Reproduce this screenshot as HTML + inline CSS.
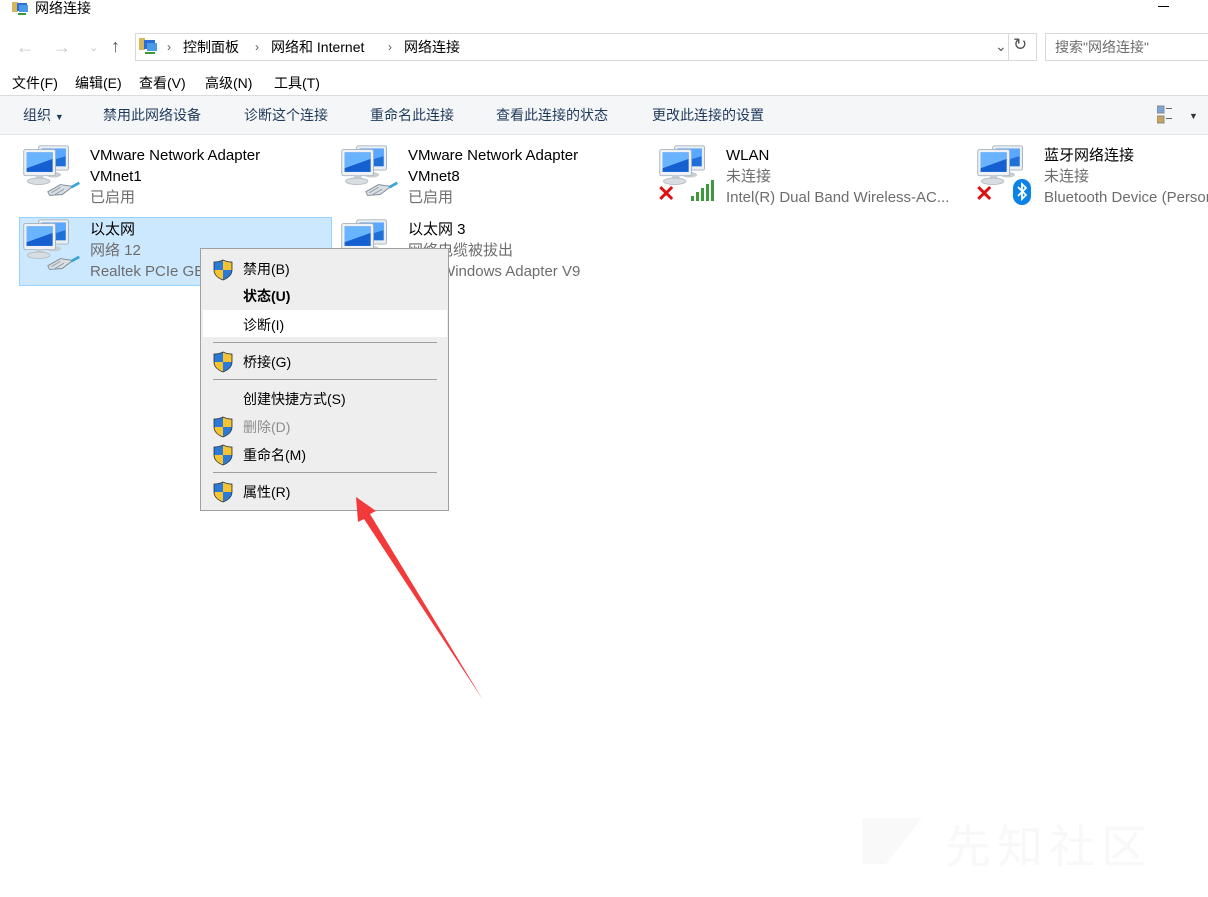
<!DOCTYPE html>
<html><head><meta charset="utf-8">
<style>
*{margin:0;padding:0;box-sizing:border-box}
html,body{overflow:hidden}
body{width:1208px;height:897px;background:#fff;position:relative;overflow:hidden;font-family:"Liberation Sans","Noto Sans CJK SC",sans-serif;font-size:14px;line-height:20px;color:#000}
.a{position:absolute;white-space:nowrap}
.g{color:#6d6d6d}
.mi{position:absolute;left:42px;font-size:14px}
.sh{position:absolute;left:12px}
.sep{position:absolute;left:12px;width:224px;height:1px;background:#a0a0a0}
</style></head><body>
<svg class="a" style="left:12px;top:0" width="18" height="16" viewBox="0 0 18 16"><rect x="0" y="2" width="6" height="10" fill="#d8b45a"/><rect x="5" y="3" width="10" height="8" fill="#2a6fd6"/><rect x="7" y="5" width="9" height="7" fill="#4a9ae8"/><rect x="6" y="13" width="8" height="2" fill="#3a9a3a"/></svg>
<div class="a" style="left:35px;top:-2px;font-size:14px">网络连接</div>
<div class="a" style="left:1158px;top:6px;width:11px;height:1px;background:#000"></div>

<div class="a" style="left:16px;top:37px;color:#c8c8c8;font-size:18px">←</div>
<div class="a" style="left:53px;top:37px;color:#c8c8c8;font-size:18px">→</div>
<div class="a" style="left:89px;top:38px;color:#c8c8c8;font-size:11px">⌄</div>
<div class="a" style="left:111px;top:36px;color:#555;font-size:18px">↑</div>
<div class="a" style="left:135px;top:33px;width:902px;height:28px;border:1px solid #d9d9d9"></div>
<div class="a" style="left:1008px;top:33px;width:1px;height:28px;background:#d9d9d9"></div>
<svg class="a" style="left:139px;top:37px" width="20" height="18" viewBox="0 0 20 18"><rect x="0" y="1" width="6" height="12" fill="#d8b45a"/><rect x="5" y="3" width="11" height="9" fill="#2a6fd6"/><rect x="8" y="6" width="10" height="8" fill="#4a9ae8"/><rect x="6" y="15" width="10" height="2" fill="#3a9a3a"/></svg>
<div class="a" style="left:167px;top:37px;color:#555;font-size:12px">›</div>
<div class="a" style="left:183px;top:37px">控制面板</div>
<div class="a" style="left:255px;top:37px;color:#555;font-size:12px">›</div>
<div class="a" style="left:271px;top:37px">网络和 Internet</div>
<div class="a" style="left:388px;top:37px;color:#555;font-size:12px">›</div>
<div class="a" style="left:404px;top:37px">网络连接</div>
<div class="a" style="left:995px;top:36px;color:#555;font-size:14px">⌄</div>
<div class="a" style="left:1013px;top:35px;color:#555;font-size:17px">↻</div>
<div class="a" style="left:1045px;top:33px;width:170px;height:28px;border:1px solid #d9d9d9"></div>
<div class="a g" style="left:1055px;top:37px">搜索"网络连接"</div>

<div class="a" style="left:12px;top:73px">文件(F)</div>
<div class="a" style="left:75px;top:73px">编辑(E)</div>
<div class="a" style="left:139px;top:73px">查看(V)</div>
<div class="a" style="left:205px;top:73px">高级(N)</div>
<div class="a" style="left:274px;top:73px">工具(T)</div>

<div class="a" style="left:0;top:95px;width:1208px;height:40px;background:#f5f6f7;border-top:1px solid #dadbdc;border-bottom:1px solid #e5e5e5"></div>
<div class="a" style="left:23px;top:105px;color:#1e395b">组织 <span style="font-size:9px">▼</span></div>
<div class="a" style="left:103px;top:105px;color:#1e395b">禁用此网络设备</div>
<div class="a" style="left:244px;top:105px;color:#1e395b">诊断这个连接</div>
<div class="a" style="left:370px;top:105px;color:#1e395b">重命名此连接</div>
<div class="a" style="left:496px;top:105px;color:#1e395b">查看此连接的状态</div>
<div class="a" style="left:652px;top:105px;color:#1e395b">更改此连接的设置</div>
<svg class="a" style="left:1157px;top:105px" width="18" height="20" viewBox="0 0 18 20"><rect x="0" y="1" width="7" height="7" fill="#7aa7d8" stroke="#888"/><rect x="0" y="11" width="7" height="7" fill="#c9a45a" stroke="#888"/><rect x="9" y="3" width="6" height="1" fill="#666"/><rect x="9" y="13" width="6" height="1" fill="#666"/></svg>
<div class="a" style="left:1189px;top:106px;font-size:9px;color:#333">▼</div>

<div class="a" style="left:19px;top:217px;width:313px;height:69px;background:#cce8ff;border:1px solid #99d1ff"></div>

<svg width="0" height="0" style="position:absolute"><defs>
<symbol id="pc" viewBox="0 0 60 60">
<rect x="20" y="3" width="32" height="26" rx="2" fill="#e9eef3" stroke="#a8b2bc"/><rect x="23" y="6" width="26" height="19" fill="#1f6fd8"/><path d="M23 6h26v8L23 22z" fill="#5aa7ff"/>
<ellipse cx="36" cy="34" rx="8" ry="3" fill="#c9ced3"/>
<rect x="4" y="7" width="34" height="28" rx="2" fill="#eef2f6" stroke="#a8b2bc"/><rect x="7" y="10" width="28" height="21" fill="#1560d0"/><path d="M7 10h28v7L7 27z" fill="#6ab4ff"/>
<rect x="17" y="35" width="8" height="4" fill="#c9ced3"/><ellipse cx="20" cy="41" rx="12" ry="3.5" fill="#d8dde2" stroke="#b5bcc3"/>
</symbol>
<symbol id="plug" viewBox="0 0 40 24"><path d="M2 14l14-8 14 2 -12 9 -14 1z" fill="#d9dee3" stroke="#7c8893"/><path d="M6 15l10-6M10 17l10-6" stroke="#8f9aa4"/><path d="M28 9l9-5" stroke="#3aa6d8" stroke-width="3"/></symbol>
<symbol id="shield" viewBox="0 0 20 22"><path d="M10 1C6 3 3 3 1 3v8c0 5 4 8 9 10 5-2 9-5 9-10V3c-2 0-5 0-9-2z" fill="#1d5fb5" stroke="#333" stroke-width=".8"/><path d="M10 1.5V11H1.5V3.5C4 3.3 7 3 10 1.5z" fill="#2a7ad8"/><path d="M10 11h8.5c0 5-4 8-8.5 9.5z" fill="#2a7ad8"/><path d="M10 1.5c3 1.5 6 1.8 8.5 2V11H10z" fill="#f6c431"/><path d="M10 11v9.5C5.5 19 1.5 16 1.5 11z" fill="#f6c431"/></symbol>
</defs></svg>

<svg class="a" style="left:20px;top:143px" width="56" height="56"><use href="#pc"/></svg>
<svg class="a" style="left:46px;top:178px" width="36" height="24"><use href="#plug"/></svg>
<div class="a" style="left:90px;top:146px;font-size:15px">VMware Network Adapter</div>
<div class="a" style="left:90px;top:167px;font-size:15px">VMnet1</div>
<div class="a g" style="left:90px;top:188px;font-size:15px">已启用</div>

<svg class="a" style="left:338px;top:143px" width="56" height="56"><use href="#pc"/></svg>
<svg class="a" style="left:364px;top:178px" width="36" height="24"><use href="#plug"/></svg>
<div class="a" style="left:408px;top:146px;font-size:15px">VMware Network Adapter</div>
<div class="a" style="left:408px;top:167px;font-size:15px">VMnet8</div>
<div class="a g" style="left:408px;top:188px;font-size:15px">已启用</div>

<svg class="a" style="left:656px;top:143px" width="56" height="56"><use href="#pc"/></svg>
<div class="a" style="left:657px;top:184px;color:#e01010;font-size:22px;font-weight:bold">✕</div>
<svg class="a" style="left:689px;top:178px" width="26" height="24" viewBox="0 0 26 24"><rect x="2" y="18" width="3" height="5" fill="#3c9a3c"/><rect x="7" y="14" width="3" height="9" fill="#3c9a3c"/><rect x="12" y="10" width="3" height="13" fill="#3c9a3c"/><rect x="17" y="6" width="3" height="17" fill="#3c9a3c"/><rect x="22" y="2" width="3" height="21" fill="#3c9a3c"/></svg>
<div class="a" style="left:726px;top:146px;font-size:15px">WLAN</div>
<div class="a g" style="left:726px;top:167px;font-size:15px">未连接</div>
<div class="a g" style="left:726px;top:188px;font-size:15px">Intel(R) Dual Band Wireless-AC...</div>

<svg class="a" style="left:974px;top:143px" width="56" height="56"><use href="#pc"/></svg>
<div class="a" style="left:975px;top:184px;color:#e01010;font-size:22px;font-weight:bold">✕</div>
<svg class="a" style="left:1012px;top:178px" width="20" height="28" viewBox="0 0 20 28"><rect x="1" y="1" width="18" height="26" rx="9" fill="#0a82e6"/><path d="M6 9l8 8-4 4V6l4 4-8 8" fill="none" stroke="#fff" stroke-width="1.8"/></svg>
<div class="a" style="left:1044px;top:146px;width:164px;overflow:hidden">
<div style="font-size:15px;height:21px">蓝牙网络连接</div>
<div class="g" style="font-size:15px;height:21px">未连接</div>
<div class="g" style="font-size:15px">Bluetooth Device (Personal</div>
</div>

<svg class="a" style="left:20px;top:217px" width="56" height="56"><use href="#pc"/></svg>
<svg class="a" style="left:46px;top:252px" width="36" height="24"><use href="#plug"/></svg>
<div class="a" style="left:90px;top:220px;font-size:15px">以太网</div>
<div class="a g" style="left:90px;top:241px;font-size:15px">网络 12</div>
<div class="a g" style="left:90px;top:262px;font-size:15px">Realtek PCIe GBE Family</div>

<svg class="a" style="left:338px;top:217px" width="56" height="56"><use href="#pc"/></svg>
<div class="a" style="left:408px;top:220px;font-size:15px">以太网 3</div>
<div class="a g" style="left:408px;top:241px;font-size:15px">网络电缆被拔出</div>
<div class="a g" style="left:408px;top:262px;font-size:15px">TAP-Windows Adapter V9</div>

<div class="a" style="left:200px;top:248px;width:249px;height:263px;background:#eeeeee;border:1px solid #a0a0a0">
 <div class="a" style="left:2px;top:61px;width:244px;height:27px;background:#fff"></div>
 <svg class="sh" style="top:10px" width="20" height="22"><use href="#shield"/></svg>
 <div class="mi" style="top:10px">禁用(B)</div>
 <div class="mi" style="top:37px;font-weight:bold">状态(U)</div>
 <div class="mi" style="top:66px">诊断(I)</div>
 <div class="sep" style="top:93px"></div>
 <svg class="sh" style="top:102px" width="20" height="22"><use href="#shield"/></svg>
 <div class="mi" style="top:103px">桥接(G)</div>
 <div class="sep" style="top:130px"></div>
 <div class="mi" style="top:140px">创建快捷方式(S)</div>
 <svg class="sh" style="top:167px" width="20" height="22"><use href="#shield"/></svg>
 <div class="mi" style="top:168px;color:#8d8d8d">删除(D)</div>
 <svg class="sh" style="top:195px" width="20" height="22"><use href="#shield"/></svg>
 <div class="mi" style="top:196px">重命名(M)</div>
 <div class="sep" style="top:223px"></div>
 <svg class="sh" style="top:232px" width="20" height="22"><use href="#shield"/></svg>
 <div class="mi" style="top:233px">属性(R)</div>
</div>

<svg class="a" style="left:0;top:0" width="1208" height="897"><path d="M356 497L376 511 370 514 483 700 364 519 358 522z" fill="#f33a3a"/></svg>

<div class="a" style="left:862px;top:818px;width:60px;height:46px;background:#f9f9f9;clip-path:polygon(0 0,100% 0,40% 100%,0 100%)"></div>
<div class="a" style="left:945px;top:822px;font-size:46px;line-height:50px;color:#f8f8f8;letter-spacing:6px">先知社区</div>
</body></html>
